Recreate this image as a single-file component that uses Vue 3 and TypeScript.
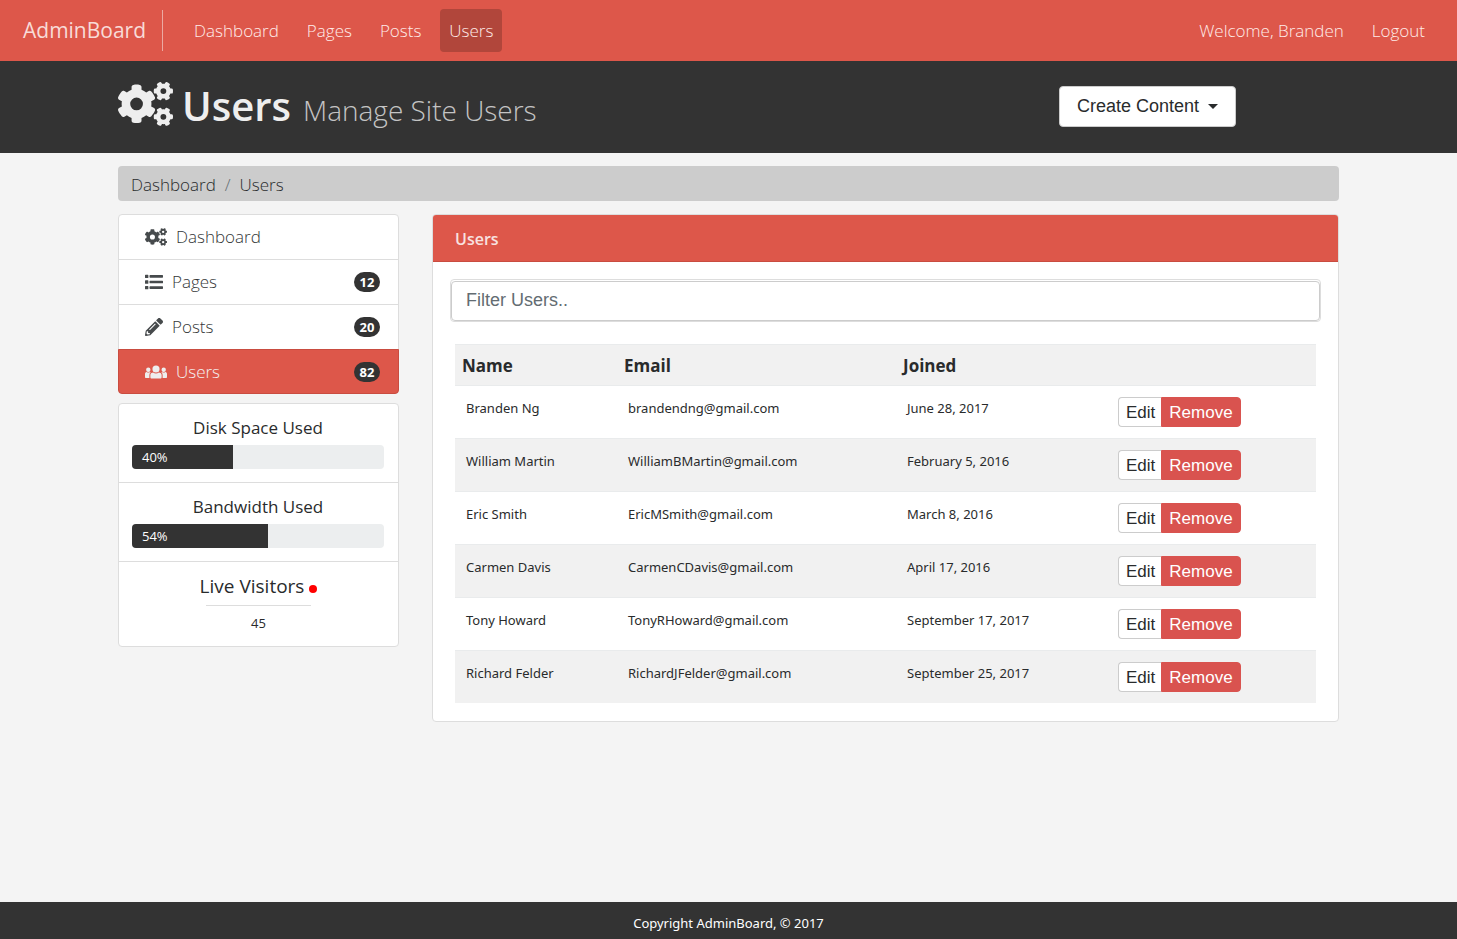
<script setup lang="ts">
import { computed, ref } from 'vue'

interface User {
  name: string
  email: string
  joined: string
}

interface MenuItem {
  label: string
  icon: 'cogs' | 'list' | 'pencil' | 'users'
  count?: number
  active?: boolean
}

const navLinks = ['Dashboard', 'Pages', 'Posts', 'Users']

const menu: MenuItem[] = [
  { label: 'Dashboard', icon: 'cogs' },
  { label: 'Pages', icon: 'list', count: 12 },
  { label: 'Posts', icon: 'pencil', count: 20 },
  { label: 'Users', icon: 'users', count: 82, active: true },
]

const meters = [
  { label: 'Disk Space Used', value: 40 },
  { label: 'Bandwidth Used', value: 54 },
]

const users = ref<User[]>([
  { name: 'Branden Ng', email: 'brandendng@gmail.com', joined: 'June 28, 2017' },
  { name: 'William Martin', email: 'WilliamBMartin@gmail.com', joined: 'February 5, 2016' },
  { name: 'Eric Smith', email: 'EricMSmith@gmail.com', joined: 'March 8, 2016' },
  { name: 'Carmen Davis', email: 'CarmenCDavis@gmail.com', joined: 'April 17, 2016' },
  { name: 'Tony Howard', email: 'TonyRHoward@gmail.com', joined: 'September 17, 2017' },
  { name: 'Richard Felder', email: 'RichardJFelder@gmail.com', joined: 'September 25, 2017' },
])

const filter = ref('')
const shownUsers = computed(() => {
  const needle = filter.value.trim().toLowerCase()
  return users.value.filter((u) => (u.name + ' ' + u.email).toLowerCase().includes(needle))
})

function removeUser(user: User) {
  users.value = users.value.filter((u) => u !== user)
}

const smallGear =
  'l-8.2 14.3c-3 5.3-9.4 7.5-15.1 5.4-11.8-4.4-22.6-10.7-32.1-18.6-4.6-3.8-5.8-10.5-2.8-15.7l8.2-14.3c-6.9-8-12.3-17.3-15.9-27.4h-16.5c-6 0-11.2-4.3-12.2-10.3-2-12-2.1-24.6 0-37.1 1-6 6.2-10.4 12.2-10.4h16.5c3.6-10.1 9-19.4 15.9-27.4l-8.2-14.3c-3-5.2-1.9-11.9 2.8-15.7 9.5-7.9 20.4-14.2 32.1-18.6 5.7-2.1 12.1.1 15.1 5.4l8.2 14.3c10.5-1.9 21.2-1.9 31.7 0l8.2-14.3c3-5.3 9.4-7.5 15.1-5.4 11.8 4.4 22.6 10.7 32.1 18.6 4.6 3.8 5.8 10.5 2.8 15.7l-8.2 14.3c6.9 8 12.3 17.3 15.9 27.4h16.5c6 0 11.2 4.3 12.2 10.3 2 12 2.1 24.6 0 37.1-1 6-6.2 10.4-12.2 10.4h-16.5c-3.6 10.1-9 19.4-15.9 27.4l8.2 14.3c3 5.2 1.9 11.9-2.8 15.7-9.5 7.9-20.4 14.2-32.1 18.6-5.7 2.1-12.1-.1-15.1-5.4l-8.2-14.3c-10.4 1.9-21.2 1.9-31.7 0z'

const icons = {
  cogs: {
    width: 640,
    path:
      'M512.1 191' + smallGear + 'M494 106a34 34 0 1 0 68 0a34 34 0 1 0-68 0z' +
      'M512.1 489.9' + smallGear + 'M494 405a34 34 0 1 0 68 0a34 34 0 1 0-68 0z' +
      'M386.3 286.1l33.7 16.8c10.1 5.8 14.5 18.1 10.5 29.1-8.9 24.2-26.4 46.4-42.6 65.8-7.4 8.9-20.2 11.1-30.3 5.3l-29.1-16.8c-16 13.7-34.6 24.6-54.9 31.7v33.6c0 11.6-8.3 21.6-19.7 23.6-24.6 4.2-50.4 4.4-75.9 0-11.5-2-20-11.9-20-23.6V418c-20.3-7.2-38.9-18-54.9-31.7L74 403c-10 5.8-22.9 3.6-30.3-5.3-16.2-19.4-33.3-41.6-42.2-65.7-4-10.9.4-23.2 10.5-29.1l33.3-16.8c-3.9-20.9-3.9-42.4 0-63.4L12 205.8c-10.1-5.8-14.6-18.1-10.5-29 8.9-24.2 26-46.4 42.2-65.8 7.4-8.9 20.2-11.1 30.3-5.3l29.1 16.8c16-13.7 34.6-24.6 54.9-31.7V57.1c0-11.5 8.2-21.5 19.6-23.5 24.6-4.2 50.5-4.4 76-.1 11.5 2 20 11.9 20 23.6v33.6c20.3 7.2 38.9 18 54.9 31.7l29.1-16.8c10-5.8 22.9-3.6 30.3 5.3 16.2 19.4 33.2 41.6 42.1 65.8 4 10.9.1 23.2-10 29.1l-33.7 16.8c3.9 21 3.9 42.5 0 63.5z' +
      'M142 255a74 74 0 1 0 148 0a74 74 0 1 0-148 0z',
  },
  list: {
    width: 512,
    path: 'M128 116V76c0-8.837 7.163-16 16-16h352c8.837 0 16 7.163 16 16v40c0 8.837-7.163 16-16 16H144c-8.837 0-16-7.163-16-16zm16 176h352c8.837 0 16-7.163 16-16v-40c0-8.837-7.163-16-16-16H144c-8.837 0-16 7.163-16 16v40c0 8.837 7.163 16 16 16zm0 160h352c8.837 0 16-7.163 16-16v-40c0-8.837-7.163-16-16-16H144c-8.837 0-16 7.163-16 16v40c0 8.837 7.163 16 16 16zM16 144h64c8.837 0 16-7.163 16-16V64c0-8.837-7.163-16-16-16H16C7.163 48 0 55.163 0 64v64c0 8.837 7.163 16 16 16zm0 160h64c8.837 0 16-7.163 16-16v-64c0-8.837-7.163-16-16-16H16c-8.837 0-16 7.163-16 16v64c0 8.837 7.163 16 16 16zm0 160h64c8.837 0 16-7.163 16-16v-64c0-8.837-7.163-16-16-16H16c-8.837 0-16 7.163-16 16v64c0 8.837 7.163 16 16 16z',
  },
  pencil: {
    width: 512,
    path: 'M497.9 142.1l-46.1 46.1c-4.7 4.7-12.3 4.7-17 0l-111-111c-4.7-4.7-4.7-12.3 0-17l46.1-46.1c18.7-18.7 49.1-18.7 67.9 0l60.1 60.1c18.8 18.7 18.8 49.1 0 67.9zM284.2 99.8L21.6 362.4.4 483.9c-2.9 16.4 11.4 30.6 27.8 27.8l121.5-21.3 262.6-262.6c4.7-4.7 4.7-12.3 0-17l-111-111c-4.8-4.7-12.4-4.7-17.1 0zM124.1 339.9c-5.5-5.5-5.5-14.3 0-19.8l154-154c5.5-5.5 14.3-5.5 19.8 0s5.5 14.3 0 19.8l-154 154c-5.5 5.5-14.3 5.5-19.8 0zM88 424h48v36.3l-64.5 11.3-31.1-31.1L51.7 376H88v48z',
  },
  users: {
    width: 640,
    path: 'M320 64a104 104 0 1 0 0 208a104 104 0 1 0 0-208zM96 128a64 64 0 1 0 0 128a64 64 0 1 0 0-128zM544 128a64 64 0 1 0 0 128a64 64 0 1 0 0-128zM236 270c48 40 120 40 168 0l30 8c28 7 50 34 50 66v68c0 20-16 36-36 36H192c-20 0-36-16-36-36v-68c0-32 22-59 50-66zM48 254c28 24 68 24 96 0l20 6c-24 22-36 50-36 82v90H28c-16 0-28-12-28-28v-92c0-26 18-48 42-56zM592 254c-28 24-68 24-96 0l-20 6c24 22 36 50 36 82v90h100c16 0 28-12 28-28v-92c0-26-18-48-42-56z',
  },
}
</script>

<template>
  <div class="page">
    <nav class="navbar">
      <a class="brand" href="#">AdminBoard</a>
      <div class="nav-group">
        <a v-for="link in navLinks" :key="link" href="#" :class="['nav-link', { current: link === 'Users' }]">{{ link }}</a>
      </div>
      <div class="nav-group account">
        <a class="nav-link" href="#">Welcome, Branden</a>
        <a class="nav-link" href="#">Logout</a>
      </div>
    </nav>

    <header class="header">
      <div class="container header-row">
        <h1 class="title">
          <svg class="title-icon" viewBox="0 0 640 512" aria-hidden="true"><path fill-rule="evenodd" :d="icons.cogs.path" /></svg>
          <span>Users</span>
          <small>Manage Site Users</small>
        </h1>
        <button class="create" type="button">Create Content<span class="caret"></span></button>
      </div>
    </header>

    <main class="container content">
      <ol class="breadcrumb">
        <li><a href="#">Dashboard</a></li>
        <li class="slash" aria-hidden="true">/</li>
        <li>Users</li>
      </ol>

      <div class="columns">
        <aside class="sidebar">
          <div class="menu">
            <a v-for="item in menu" :key="item.label" href="#" :class="['menu-item', { active: item.active }]">
              <svg :class="['menu-icon', { wide: icons[item.icon].width === 640 }]" :viewBox="`0 0 ${icons[item.icon].width} 512`" aria-hidden="true">
                <path fill-rule="evenodd" :d="icons[item.icon].path" />
              </svg>
              <span>{{ item.label }}</span>
              <span v-if="item.count" class="badge">{{ item.count }}</span>
            </a>
          </div>

          <div class="stats">
            <section v-for="meter in meters" :key="meter.label" class="stat">
              <h2>{{ meter.label }}</h2>
              <div class="track" role="progressbar" :aria-label="meter.label" :aria-valuenow="meter.value">
                <div class="fill" :style="{ width: meter.value + '%' }">{{ meter.value }}%</div>
              </div>
            </section>
            <section class="stat live">
              <h2>Live Visitors<span class="dot"></span></h2>
              <hr />
              <p>45</p>
            </section>
          </div>
        </aside>

        <section class="card">
          <h2 class="card-head">Users</h2>
          <div class="card-body">
            <div class="filter">
              <input v-model="filter" type="text" placeholder="Filter Users.." aria-label="Filter Users" />
            </div>
            <table>
              <colgroup>
                <col class="col-name" />
                <col class="col-email" />
                <col class="col-joined" />
                <col class="col-actions" />
              </colgroup>
              <thead>
                <tr>
                  <th>Name</th>
                  <th>Email</th>
                  <th>Joined</th>
                  <th></th>
                </tr>
              </thead>
              <tbody>
                <tr v-for="user in shownUsers" :key="user.email">
                  <td>{{ user.name }}</td>
                  <td>{{ user.email }}</td>
                  <td>{{ user.joined }}</td>
                  <td>
                    <div class="actions">
                      <button class="edit" type="button">Edit</button>
                      <button class="remove" type="button" @click="removeUser(user)">Remove</button>
                    </div>
                  </td>
                </tr>
              </tbody>
            </table>
          </div>
        </section>
      </div>
    </main>

    <footer class="footer">Copyright AdminBoard, © 2017</footer>
  </div>
</template>

<style>
body {
  margin: 0;
  background: #f4f4f4;
}
</style>

<style scoped>
.page {
  display: flex;
  flex-direction: column;
  min-height: 100vh;
  color: #292b2c;
  font-family: 'Open Sans', 'Noto Sans', sans-serif;
  font-size: 17px;
  font-weight: 300;
  line-height: 26px;
}

.page *,
.page {
  box-sizing: border-box;
}

a {
  color: inherit;
  text-decoration: none;
}

h1,
h2,
p,
ol {
  margin: 0;
  padding: 0;
}

button,
input {
  font-family: 'Liberation Sans', Arial, sans-serif;
}

.container {
  width: calc(100% - 32px);
  max-width: 1221px;
  margin: 0 auto;
}

.navbar {
  display: flex;
  align-items: center;
  height: 61px;
  padding: 0 23px;
  background: #dd574a;
  color: #ffece9;
}

.brand {
  padding-right: 16px;
  margin-right: 22px;
  border-right: 1px solid #eba9a2;
  color: #f8dbd8;
  font-size: 21px;
  font-weight: 400;
  line-height: 41px;
}

.nav-group {
  display: flex;
  gap: 10px;
}

.account {
  margin-left: auto;
}

.nav-link {
  padding: 1px 9px 0;
  border-radius: 4px;
  line-height: 42px;
}

.nav-link.current {
  background: #b1463b;
}

.header {
  background: #333;
}

.header-row {
  display: flex;
  align-items: center;
  justify-content: space-between;
  height: 92px;
  padding: 0 103px 2px 0;
}

.title {
  display: flex;
  align-items: baseline;
  padding-top: 3px;
  color: #eee;
  font-size: 40px;
  font-weight: 600;
  line-height: 48px;
}

.title-icon {
  align-self: center;
  width: 55px;
  height: 44px;
  margin: 0 9px 7px 0;
  fill: currentColor;
}

.title small {
  margin-left: 12px;
  color: #c4c4c4;
  font-size: 28px;
  font-weight: 300;
}

.create {
  display: flex;
  align-items: center;
  height: 41px;
  padding: 0 17px;
  border: 1px solid #ccc;
  border-radius: 4px;
  background: #fff;
  color: #292b2c;
  font-size: 18px;
}

.caret {
  margin-left: 9px;
  border: 5px solid transparent;
  border-top-color: currentColor;
  border-bottom-width: 0;
}

.content {
  flex: 1;
  padding: 13px 0;
}

.breadcrumb {
  display: flex;
  gap: 9px;
  height: 35px;
  padding: 1px 13px 0;
  border-radius: 4px;
  background: #ccc;
  line-height: 36px;
  list-style: none;
}

.slash {
  color: #636c72;
}

.columns {
  display: grid;
  grid-template-columns: 281px minmax(0, 1fr);
  align-items: start;
  gap: 33px;
  margin-top: 13px;
}

.menu-item {
  display: flex;
  align-items: center;
  height: 46px;
  margin-top: -1px;
  padding: 0 18px 0 26px;
  border: 1px solid #ddd;
  background: #fff;
  color: #343738;
}

.menu-item:first-child {
  margin-top: 0;
  border-radius: 4px 4px 0 0;
}

.menu-item:last-child {
  height: 45px;
  border-radius: 0 0 4px 4px;
}

.menu-item.active {
  border-color: #c94c40;
  background: #dd574a;
  color: #f4f0f0;
}

.menu-icon {
  width: 18px;
  height: 18px;
  margin-right: 9px;
  fill: #464a4c;
}

.active .menu-icon {
  fill: #eee;
}

.menu-icon.wide {
  width: 22px;
}

.badge {
  min-width: 26px;
  margin-left: auto;
  border-radius: 10px;
  background: #333;
  color: #fff;
  font-size: 13px;
  font-weight: 700;
  line-height: 20px;
  text-align: center;
}

.stats,
.card {
  border: 1px solid #ddd;
  border-radius: 4px;
  background: #fff;
}

.stats {
  margin-top: 9px;
}

.stat {
  padding: 11px 14px 13px 13px;
  border-bottom: 1px solid #ddd;
  text-align: center;
}

.stat h2 {
  margin-bottom: 4px;
  font-size: 17px;
  font-weight: 400;
  line-height: 26px;
}

.track {
  overflow: hidden;
  border-radius: 4px;
  background: #eceeef;
}

.fill {
  padding-left: 10px;
  background: #333;
  color: #fff;
  font-size: 13px;
  font-weight: 400;
  line-height: 24px;
  text-align: left;
}

.stat.live {
  padding: 11px 13px;
  border-bottom: 0;
}

.live h2 {
  margin-bottom: 6px;
  font-size: 19px;
}

.dot {
  display: inline-block;
  width: 8px;
  height: 8px;
  margin-left: 5px;
  border-radius: 50%;
  background: #f00;
}

.live hr {
  width: 105px;
  margin: 0 auto 5px;
  border: 0;
  border-top: 1px solid #ddd;
}

.live p {
  font-size: 13px;
  font-weight: 400;
  line-height: 24px;
}

.card-head {
  padding: 3px 22px 0;
  border-bottom: 1px solid #c94c40;
  border-radius: 3px 3px 0 0;
  background: #dd574a;
  color: #f8e2e0;
  font-size: 16px;
  font-weight: 600;
  line-height: 43px;
}

.card-body {
  padding: 17px 17px 18px;
}

.filter {
  padding-top: 1px;
  border: 1px solid #ddd;
  border-radius: 4px;
}

.filter input {
  display: block;
  width: 100%;
  height: 40px;
  padding: 0 14px 2px;
  border: 1px solid #ccc;
  border-radius: 4px;
  background: #fff;
  color: #464a4c;
  font-size: 18px;
}

.filter input::placeholder {
  color: #636c72;
  opacity: 1;
}

table {
  width: calc(100% - 10px);
  margin: 22px 5px 0;
  border-spacing: 0;
  table-layout: fixed;
}

.col-name {
  width: 162px;
}

.col-email {
  width: 279px;
}

.col-joined {
  width: 211px;
}

.col-actions {
  width: 209px;
}

th {
  height: 41px;
  padding: 2px 7px 0;
  border-top: 1px solid #e9ebec;
  font-weight: 700;
  line-height: 28px;
  text-align: left;
}

td {
  height: 53px;
  padding: 11px;
  border-top: 1px solid #e9ebec;
  font-family: 'Noto Sans', 'Open Sans', sans-serif;
  font-size: 13px;
  font-weight: 400;
  line-height: 22px;
  vertical-align: top;
}

thead tr,
tbody tr:nth-child(even) {
  background: #f1f1f1;
}

.actions {
  display: flex;
}

.actions button {
  height: 30px;
  padding: 1px 7px 0;
  border: 1px solid #ccc;
  border-radius: 4px 0 0 4px;
  background: #fff;
  color: #292b2c;
  font-size: 17px;
}

.actions .edit {
  padding-right: 6px;
  border-right: 0;
}

.actions .remove {
  border-color: #d9534f;
  border-radius: 0 4px 4px 0;
  background: #d9534f;
  color: #fff;
}

.footer {
  padding: 9px 16px 4px;
  background: #333;
  color: #fff;
  font-family: 'Noto Sans', 'Open Sans', sans-serif;
  font-size: 13px;
  font-weight: 400;
  line-height: 24px;
  text-align: center;
}
</style>
